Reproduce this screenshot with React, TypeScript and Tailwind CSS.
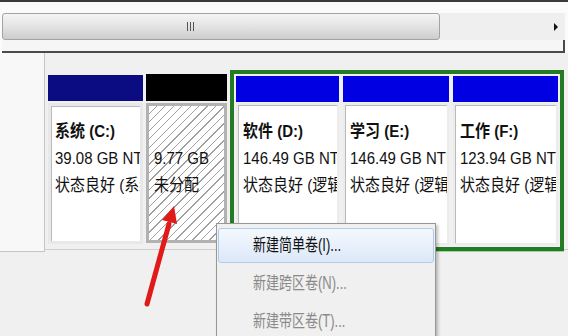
import React from 'react';

type Part = {
  id: string;
  name: string;
  size: string;
  status: string;
  bar: string;
};

const extended: Part[] = [
  { id: 'd', name: '软件 (D:)', size: '146.49 GB NTFS', status: '状态良好 (逻辑驱动器)', bar: 'w-[103px]' },
  { id: 'e', name: '学习 (E:)', size: '146.49 GB NTFS', status: '状态良好 (逻辑驱动器)', bar: 'w-[106px]' },
  { id: 'f', name: '工作 (F:)', size: '123.94 GB NTFS', status: '状态良好 (逻辑驱动器)', bar: 'w-[105px]' },
];

function Lines({ name, size, status }: { name: string; size: string; status: string }) {
  return (
    <>
      <div className="font-bold">
        <span className="inline-block leading-[18px] scale-y-[1.15]">{name || '\u00a0'}</span>
      </div>
      <div>
        <span className="inline-block leading-[18px] scale-y-[1.15]">{size}</span>
      </div>
      <div>
        <span className="inline-block leading-[18px] scale-y-[1.15]">{status}</span>
      </div>
    </>
  );
}

export default function App() {
  return (
    <div className="relative w-[568px] h-[336px] overflow-hidden bg-[#f0f0f0] text-[15px] text-[#111] font-['Liberation_Sans','Noto_Sans_CJK_SC',sans-serif]">
      {/* top edge */}
      <div className="h-[2px] bg-[#3a3a3a]" />

      {/* horizontal scroll bar */}
      <div className="bg-[#fbfbfb] pt-[11px] pl-[2px] pr-[3px]">
        <div className="flex h-[27px]">
          <div className="w-[438px] rounded-[3px] border border-[#a3a3a3] bg-linear-to-b from-[#f5f5f5] via-[#e3e3e3] to-[#cdcdcd] flex items-center pl-[184px]">
            <div className="flex gap-[2px]">
              <span className="w-px h-[9px] bg-[#555]" />
              <span className="w-px h-[9px] bg-[#555]" />
              <span className="w-px h-[9px] bg-[#555]" />
            </div>
          </div>
          <div className="flex-1 bg-[#efefef] flex items-center justify-end pr-[7px]">
            <div className="w-0 h-0 border-y-[4px] border-y-transparent border-l-[4px] border-l-[#111]" />
          </div>
        </div>
        <div className="h-[13px] border-b-[2px] border-r-[2px] border-[#4a4a4a] bg-[#f6f6f6]" />
      </div>

      {/* disk map */}
      <div className="flex">
        <div className="w-[45px] h-[199px] bg-[#f8f8f8] border-r border-b border-[#c4c4c4]" />
        <div className="flex-1 h-[197px] border-b border-[#cfcfcf] pt-[17px] flex items-start">
          {/* C: */}
          <div className="ml-[3px] mt-[5px] w-[95px]">
            <div className="h-[26px] bg-[#0c0c82]" />
            <div className="mt-[2px] h-[141px] bg-white border-[3px] border-[#e8e8e8]">
              <div className="h-full border-l border-t border-[#bababa] pl-[3px] pt-[10px] leading-[27px] whitespace-nowrap overflow-hidden">
                <Lines name="系统 (C:)" size="39.08 GB NTFS" status="状态良好 (系统, 启动, 页面文件, 活动, 主分区)" />
              </div>
            </div>
          </div>

          {/* unallocated */}
          <div className="ml-[3px] mt-[4px] w-[81px]">
            <div className="h-[27px] bg-black" />
            <div className="mt-[2px] h-[140px] border-[3px] border-[#b2b2b2] [background-image:repeating-linear-gradient(135deg,#ffffff_0px,#ffffff_5px,#a0a0a0_5px,#a0a0a0_6px)] pl-[5px] pt-[11px] leading-[27px] whitespace-nowrap overflow-hidden">
              <Lines name="" size="9.77 GB" status="未分配" />
            </div>
          </div>

          {/* extended partition */}
          <div className="ml-[3px] w-[334px] h-[181px] border-[4px] border-[#257a25] p-[2px] flex gap-[4px] shadow-[0_1px_0_#9fd49f]">
            {extended.map((p) => (
              <div key={p.id} className={`${p.bar} flex flex-col`}>
                <div className="h-[26px] bg-[#0000e2]" />
                <div className="mt-[1px] flex-1 bg-white border-[2px] border-[#ececec]">
                  <div className="h-full border-l border-t border-[#bababa] pl-[4px] pt-[11px] leading-[27px] whitespace-nowrap overflow-hidden">
                    <Lines name={p.name} size={p.size} status={p.status} />
                  </div>
                </div>
              </div>
            ))}
          </div>
        </div>
      </div>

      {/* red arrow */}
      <svg className="absolute left-0 top-0 pointer-events-none" width="568" height="336" viewBox="0 0 568 336">
        <line x1="147" y1="304" x2="169" y2="224" stroke="#e11919" strokeWidth="5" strokeLinecap="round" />
        <polygon points="174,206 177,224 162,220" fill="#e11919" />
      </svg>

      {/* context menu */}
      <div className="absolute left-[216px] top-[223px] w-[220px] h-[125px] bg-[#f0f0f0] border border-[#979797] shadow-[2px_2px_3px_rgba(0,0,0,0.25)] pt-[4px] px-[1px] text-[13px]">
        <div className="h-[35px] rounded-[3px] border border-[#aecbef] bg-linear-to-b from-[#f4f8fe] to-[#dce8f8] flex items-center pl-[34px]">
          <span className="inline-block scale-y-[1.35]">新建简单卷(I)...</span>
        </div>
        <div className="mt-[2px] h-[38px] flex items-center pl-[35px] text-[#8a8a8a]">
          <span className="inline-block scale-y-[1.35]">新建跨区卷(N)...</span>
        </div>
        <div className="h-[38px] flex items-center pl-[35px] text-[#8a8a8a]">
          <span className="inline-block scale-y-[1.35]">新建带区卷(T)...</span>
        </div>
      </div>
    </div>
  );
}
